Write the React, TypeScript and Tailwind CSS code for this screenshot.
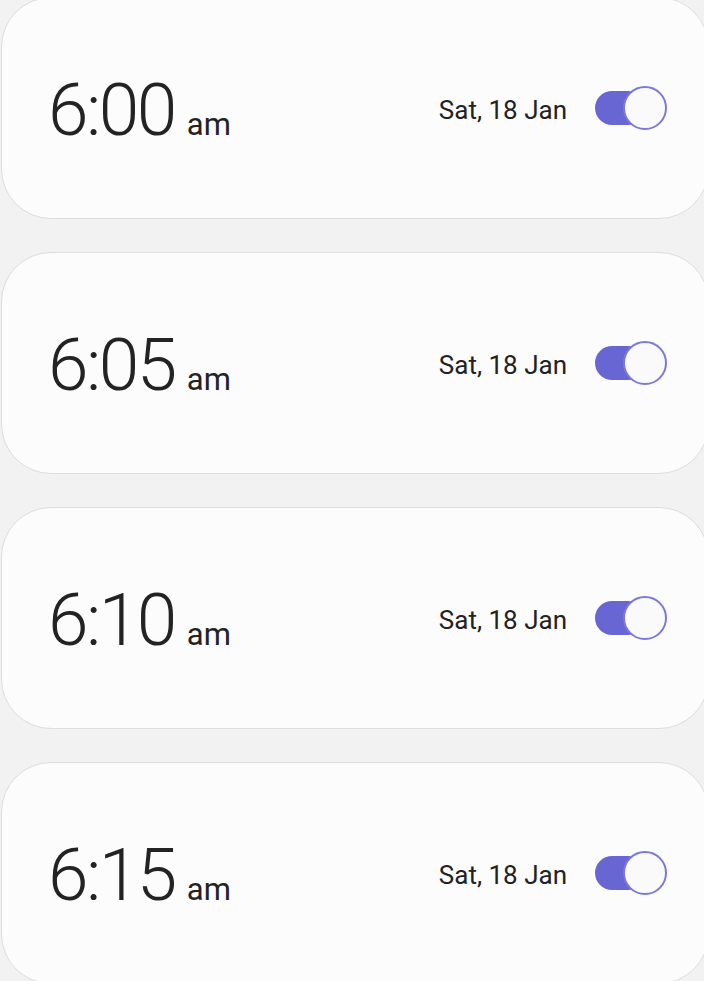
const alarms = ['6:00', '6:05', '6:10', '6:15']

function Toggle() {
  return (
    <div className="relative h-[44px] w-[72px]">
      <div className="absolute left-0 top-[5px] h-[34px] w-[50px] rounded-full bg-[#6866d2]" />
      <div className="absolute right-0 top-0 h-[44px] w-[44px] rounded-full border-2 border-[#7c78dc] bg-[#fafafa]" />
    </div>
  )
}

export default function App() {
  return (
    <div className="h-[981px] overflow-hidden bg-[#f2f2f2] font-['Roboto',sans-serif]">
      <div className="-mt-[3px] ml-px flex w-[708px] flex-col gap-[33px]">
        {alarms.map((t) => (
          <div
            key={t}
            className="flex h-[222px] items-center rounded-[50px] border border-[#dddddd] bg-[#fcfcfc] pl-[46px] pr-[41px]"
          >
            <div className="flex items-baseline pt-[4px] text-[#232323]">
              <span className="text-[73px] font-light leading-none tracking-[-2.5px]">{t}</span>
              <span className="ml-[12px] text-[31px] leading-none">am</span>
            </div>
            <span className="ml-auto pt-[4px] text-[26px] text-[#222222]">Sat, 18 Jan</span>
            <div className="ml-[28px]">
              <Toggle />
            </div>
          </div>
        ))}
      </div>
    </div>
  )
}
